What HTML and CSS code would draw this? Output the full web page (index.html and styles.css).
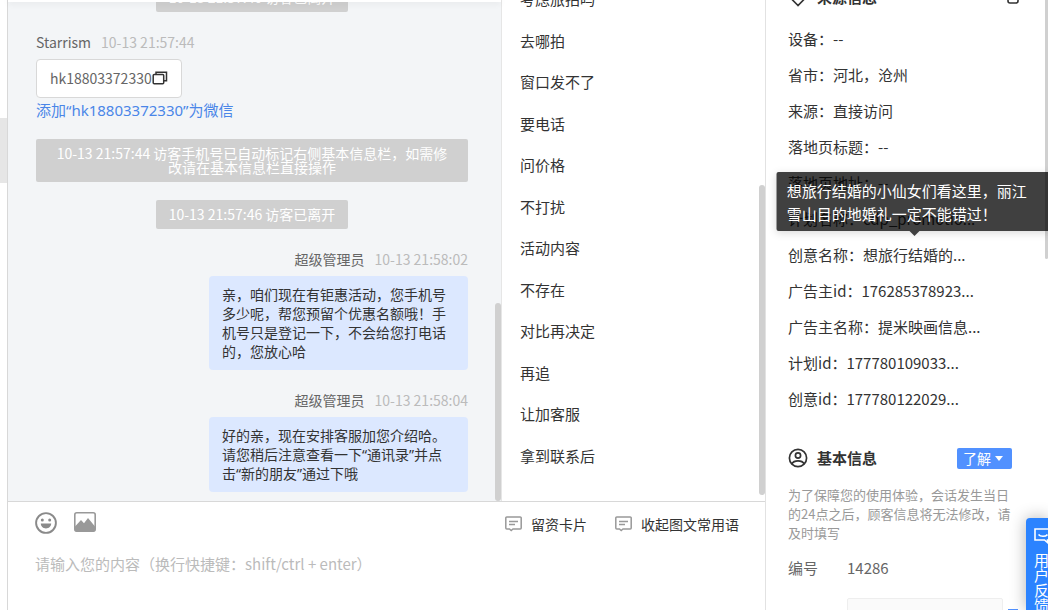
FILE: index.html
```html
<!DOCTYPE html>
<html lang="zh-CN">
<head>
    <meta charset="UTF-8">
    <meta name="viewport" content="width=device-width, initial-scale=1.0">
    <title>在线客服</title>
    <link rel="stylesheet" href="styles.css">
</head>
<body>
    <div class="app">
        <aside class="rail">
            <div class="rail-active"></div>
        </aside>

        <main class="center">
            <div class="panels">
                <section class="chat">
                    <div class="chat-header"></div>
                    <div class="chat-body">
                        <div class="notice">10-13 21:57:40 访客已离开</div>

                        <div class="message">
                            <div class="meta"><span class="name">Starrism</span><time>10-13 21:57:44</time></div>
                            <div class="bubble bubble-visitor">
                                <span>hk18803372330</span>
                                <button type="button" class="copy" aria-label="复制">
                                    <svg width="16" height="14" viewBox="0 0 16 14" fill="none" stroke="#333" stroke-width="1.5">
                                        <path d="M4 3V1.2h10.5v8.6H12"/>
                                        <rect x="1.2" y="3.5" width="10.5" height="9.2" rx="1"/>
                                    </svg>
                                </button>
                            </div>
                            <a href="#" class="add-link">添加“hk18803372330”为微信</a>
                        </div>

                        <div class="notice notice-wide">10-13 21:57:44 访客手机号已自动标记右侧基本信息栏，如需修改请在基本信息栏直接操作</div>
                        <div class="notice">10-13 21:57:46 访客已离开</div>

                        <div class="message message-own">
                            <div class="meta"><span class="name">超级管理员</span><time>10-13 21:58:02</time></div>
                            <div class="bubble bubble-own">亲，咱们现在有钜惠活动，您手机号多少呢，帮您预留个优惠名额哦！手机号只是登记一下，不会给您打电话的，您放心哈</div>
                        </div>

                        <div class="message message-own">
                            <div class="meta"><span class="name">超级管理员</span><time>10-13 21:58:04</time></div>
                            <div class="bubble bubble-own">好的亲，现在安排客服加您介绍哈。请您稍后注意查看一下“通讯录”并点击“新的朋友”通过下哦</div>
                        </div>
                    </div>
                    <div class="thumb thumb-chat"></div>
                </section>

                <section class="phrases">
                    <ul class="phrase-list">
                        <li>考虑旅拍吗</li>
                        <li>去哪拍</li>
                        <li>窗口发不了</li>
                        <li>要电话</li>
                        <li>问价格</li>
                        <li>不打扰</li>
                        <li>活动内容</li>
                        <li>不存在</li>
                        <li>对比再决定</li>
                        <li>再追</li>
                        <li>让加客服</li>
                        <li>拿到联系后</li>
                    </ul>
                    <div class="thumb thumb-phrases"></div>
                </section>
            </div>

            <section class="composer">
                <div class="toolbar">
                    <button type="button" class="tool" aria-label="表情">
                        <svg width="22" height="22" viewBox="0 0 22 22">
                            <circle cx="11" cy="11" r="9.9" fill="none" stroke="#8a8a8a" stroke-width="1.9"/>
                            <circle cx="7.3" cy="8" r="1.5" fill="#8a8a8a"/>
                            <circle cx="14.7" cy="8" r="1.5" fill="#8a8a8a"/>
                            <path d="M5.8 11.6h10.4c0 3-2.3 4.9-5.2 4.9s-5.2-1.9-5.2-4.9z" fill="#8a8a8a"/>
                        </svg>
                    </button>
                    <button type="button" class="tool" aria-label="图片">
                        <svg width="22" height="20" viewBox="0 0 22 20">
                            <rect x="0.8" y="0.8" width="20.4" height="18.4" rx="2" fill="#fff" stroke="#999" stroke-width="1.6"/>
                            <path d="M1 14.5l6-6.5 3 3.2L14 6l7 8.5V18a1.5 1.5 0 0 1-1.5 1.5h-17A1.5 1.5 0 0 1 1 18z" fill="#999"/>
                        </svg>
                    </button>
                    <div class="tool-links">
                        <button type="button" class="tool-text">
                            <svg width="17" height="16" viewBox="0 0 17 16" fill="none" stroke="#999" stroke-width="1.5">
                                <path d="M1.8 1h13.4a1 1 0 0 1 1 1v10a1 1 0 0 1-1 1H8l-1.8 1.5L4.5 13H1.8a1 1 0 0 1-1-1V2a1 1 0 0 1 1-1z"/>
                                <path d="M4 5.5h9M4 8.5h6"/>
                            </svg>
                            留资卡片
                        </button>
                        <button type="button" class="tool-text">
                            <svg width="17" height="16" viewBox="0 0 17 16" fill="none" stroke="#999" stroke-width="1.5">
                                <path d="M1.8 1h13.4a1 1 0 0 1 1 1v10a1 1 0 0 1-1 1H8l-1.8 1.5L4.5 13H1.8a1 1 0 0 1-1-1V2a1 1 0 0 1 1-1z"/>
                                <path d="M4 5.5h9M4 8.5h6"/>
                            </svg>
                            收起图文常用语
                        </button>
                    </div>
                </div>
                <textarea class="input" aria-label="消息内容" placeholder="请输入您的内容（换行快捷键：shift/ctrl + enter）"></textarea>
            </section>
        </main>

        <aside class="info">
            <header class="info-header">
                <svg width="20" height="20" viewBox="0 0 20 20" fill="none" stroke="#333" stroke-width="1.7">
                    <path d="M10 18.5L5 13.5a7 7 0 1 1 10 0z"/>
                    <circle cx="10" cy="8" r="2.5"/>
                </svg>
                <h2>来源信息</h2>
                <button type="button" class="icon-button" aria-label="编辑">
                    <svg width="12" height="14" viewBox="0 0 12 14" fill="none" stroke="#333" stroke-width="1.6">
                        <rect x="1" y="1" width="10" height="12" rx="2"/>
                    </svg>
                </button>
            </header>
            <dl class="source">
                <div><dt>设备：</dt><dd>--</dd></div>
                <div><dt>省市：</dt><dd>河北，沧州</dd></div>
                <div><dt>来源：</dt><dd>直接访问</dd></div>
                <div><dt>落地页标题：</dt><dd>--</dd></div>
                <div><dt>落地页地址：</dt><dd>--</dd></div>
                <div><dt>计划名称：</dt><dd>cdp_promotio...</dd></div>
                <div>
                    <dt>创意名称：</dt>
                    <dd class="has-tooltip">想旅行结婚的...<span class="tooltip" role="tooltip">想旅行结婚的小仙女们看这里，丽江雪山目的地婚礼一定不能错过！</span></dd>
                </div>
                <div><dt>广告主id：</dt><dd>176285378923...</dd></div>
                <div><dt>广告主名称：</dt><dd>提米映画信息...</dd></div>
                <div><dt>计划id：</dt><dd>177780109033...</dd></div>
                <div><dt>创意id：</dt><dd>177780122029...</dd></div>
            </dl>

            <header class="info-header basic-header">
                <svg width="20" height="20" viewBox="0 0 20 20" fill="none" stroke="#333" stroke-width="1.7">
                    <circle cx="10" cy="10" r="8.6"/>
                    <circle cx="10" cy="7.5" r="2.6"/>
                    <path d="M3.8 15.8c1.2-2.2 3.2-3 6.2-3s5 .8 6.2 3"/>
                </svg>
                <h2>基本信息</h2>
                <button type="button" class="level">了解<span class="caret"></span></button>
            </header>
            <p class="tip">为了保障您的使用体验，会话发生当日的24点之后，顾客信息将无法修改，请及时填写</p>
            <div class="field">
                <span class="field-label">编号</span>
                <span>14286</span>
            </div>
            <div class="field field-edit-row">
                <input type="text" class="field-input" aria-label="姓名">
                <button type="button" class="field-edit" aria-label="保存"></button>
            </div>
            <div class="thumb thumb-info"></div>
        </aside>

        <button type="button" class="feedback">
            <svg width="18" height="16" viewBox="0 0 18 16" fill="none" stroke="#fff" stroke-width="1.6">
                <path d="M1 1h16v11h-3.5v2.5L10.5 12H1z"/>
                <path d="M4.5 6.5c2 2.4 7 2.4 9 0"/>
            </svg>
            <span>用户反馈</span>
        </button>
    </div>
</body>
</html>
```

FILE: styles.css
```css
* {
    box-sizing: border-box;
}
body {
    margin: 0;
    font-family: "Noto Sans CJK SC", sans-serif;
    font-size: 15px;
    line-height: 20px;
    color: #333;
    background-color: #fff;
}
button {
    padding: 0;
    border: none;
    background: none;
    font: inherit;
    color: inherit;
    cursor: pointer;
}
svg {
    display: block;
    flex: none;
}
.app {
    position: relative;
    display: flex;
    height: 100vh;
    overflow: hidden;
}

/* left rail */
.rail {
    flex: none;
    width: 8px;
    padding-top: 118px;
    border-right: 1px solid #d8d8d8;
}
.rail-active {
    height: 65px;
    background-color: #e6e6e6;
}

.center {
    flex: 1;
    min-width: 0;
    display: flex;
    flex-direction: column;
    border-right: 1px solid #e2e2e2;
}
.panels {
    flex: 1;
    min-height: 0;
    display: flex;
}

/* chat */
.chat {
    position: relative;
    flex: 1;
    display: flex;
    flex-direction: column;
    min-width: 0;
    border-right: 1px solid #e6e6e6;
    background-color: #f3f5f7;
}
.chat-header {
    flex: none;
    z-index: 1;
    height: 2px;
    background-color: #fff;
    box-shadow: 0 1px 6px rgba(0, 0, 0, 0.12);
}
.chat-body {
    flex: 1;
    min-height: 0;
    display: flex;
    flex-direction: column;
    justify-content: flex-end;
    align-items: center;
    padding: 0 33px 9px 28px;
    overflow: hidden;
    font-size: 14px;
}
.notice {
    flex: none;
    margin-top: 18px;
    padding: 7px 13px 8px;
    border-radius: 2px;
    background-color: #d0d0d0;
    color: #fff;
    line-height: 14px;
    text-align: center;
}
.notice-wide {
    padding: 7px 18px 8px;
}
.message {
    flex: none;
    align-self: stretch;
    display: flex;
    flex-direction: column;
    align-items: flex-start;
    margin-top: 20px;
}
.message-own {
    align-items: flex-end;
}
.meta {
    display: flex;
    gap: 10px;
    margin-bottom: 7px;
}
.name {
    color: #666;
}
time {
    color: #bbb;
}
.bubble {
    border-radius: 4px;
}
.bubble-visitor {
    display: flex;
    align-items: center;
    height: 39px;
    padding: 0 13px 2px;
    border: 1px solid #d8d8d8;
    background-color: #fff;
    color: #666;
}
.bubble-own {
    width: 259px;
    padding: 9px 13px;
    background-color: #dce8ff;
    font-family: "Noto Sans", "Noto Sans CJK SC", sans-serif;
    line-height: 19px;
}
.add-link {
    margin: 2px 0 1px;
    color: #4a86e8;
    font-family: "Noto Sans", "Noto Sans CJK SC", sans-serif;
    font-size: 15px;
    text-decoration: none;
}

/* scrollbar thumbs */
.thumb {
    position: absolute;
    right: 0;
    width: 6px;
    border-radius: 3px;
    background-color: #d0d0d0;
}
.thumb-chat {
    bottom: 0;
    height: 198px;
}
.thumb-phrases {
    bottom: 6px;
    height: 310px;
}
.thumb-info {
    top: 0;
    width: 3px;
    height: 259px;
    border-radius: 0 0 3px 3px;
}

/* quick phrases */
.phrases {
    position: relative;
    flex: none;
    display: flex;
    width: 263px;
    overflow: hidden;
}
.phrase-list {
    display: flex;
    flex-direction: column;
    justify-content: space-between;
    margin: -11px 0 0;
    padding: 0 18px 35px;
    list-style: none;
}

/* composer */
.composer {
    flex: none;
    border-top: 1px solid #d8d8d8;
}
.toolbar {
    display: flex;
    align-items: flex-start;
    gap: 17px;
    padding: 10px 26px 0 27px;
}
.tool-links {
    display: flex;
    gap: 28px;
    margin-left: auto;
    padding-top: 2px;
    font-size: 14px;
}
.tool-text {
    display: flex;
    align-items: center;
    gap: 9px;
}
.input {
    display: block;
    width: 100%;
    height: 76px;
    padding: 20px 27px;
    border: none;
    outline: none;
    resize: none;
    background: none;
    font: inherit;
}
.input::placeholder {
    color: #bbb;
}

/* visitor info */
.info {
    position: relative;
    flex: none;
    width: 282px;
    padding: 0 34px 0 22px;
    overflow: hidden;
}
.info-header {
    display: flex;
    align-items: center;
    gap: 9px;
    height: 22px;
    margin-top: -14px;
}
.info-header h2 {
    margin: 0;
    font-size: 15px;
    font-weight: bold;
}
.icon-button {
    margin-left: auto;
    margin-right: -5px;
}
.source {
    display: grid;
    gap: 16px;
    margin: 21px 0 0;
}
.source div {
    display: flex;
    white-space: nowrap;
}
.source dd {
    margin: 0;
}
.has-tooltip {
    position: relative;
    z-index: 1;
}
.tooltip {
    position: absolute;
    bottom: 100%;
    left: 50%;
    width: 275px;
    margin-bottom: 14px;
    padding: 7px 18px 6px 10px;
    border-radius: 2px;
    background-color: rgba(0, 0, 0, 0.75);
    box-shadow: 0 2px 8px rgba(0, 0, 0, 0.15);
    color: #fff;
    line-height: 23px;
    white-space: normal;
    transform: translateX(-50%);
}
.tooltip::after {
    content: "";
    position: absolute;
    top: 100%;
    left: 50%;
    margin-left: -5px;
    border: 5px solid transparent;
    border-top-color: #404040;
    border-bottom: none;
}
.basic-header {
    margin-top: 38px;
}
.level {
    display: flex;
    align-items: center;
    gap: 4px;
    height: 21px;
    margin-left: auto;
    margin-right: 2px;
    padding: 0 9px 0 6px;
    border-radius: 2px;
    background-color: #5191ff;
    color: #fff;
    font-size: 14px;
}
.caret {
    border: 4px solid transparent;
    border-top: 5px solid #fff;
    border-bottom: none;
}
.tip {
    margin: 16px -4px 16px 0;
    color: #999;
    font-size: 13px;
    line-height: 19px;
}
.field {
    display: flex;
    align-items: flex-start;
    margin-bottom: 20px;
    color: #666;
}
.field-label {
    width: 59px;
}
.field-edit-row {
    padding-left: 59px;
}
.field-input {
    flex: 1;
    min-width: 0;
    height: 36px;
    margin-right: 5px;
    border: 1px solid #eee;
    border-radius: 2px;
    background-color: #fafafa;
    font: inherit;
}
.field-edit {
    width: 10px;
    height: 10px;
    margin: 11px -4px 0 0;
    background-color: #5191ff;
}

/* feedback tab */
.feedback {
    position: absolute;
    right: 0;
    bottom: 0;
    width: 22px;
    height: 92px;
    padding: 10px 0 0 8px;
    border-radius: 4px 0 0 0;
    overflow: hidden;
    background-color: #2b83ff;
    box-shadow: 0 0 16px rgba(0, 0, 0, 0.3);
    color: #fff;
    line-height: 15px;
}
.feedback span {
    display: block;
    width: 15px;
    margin-top: 8px;
}
```
